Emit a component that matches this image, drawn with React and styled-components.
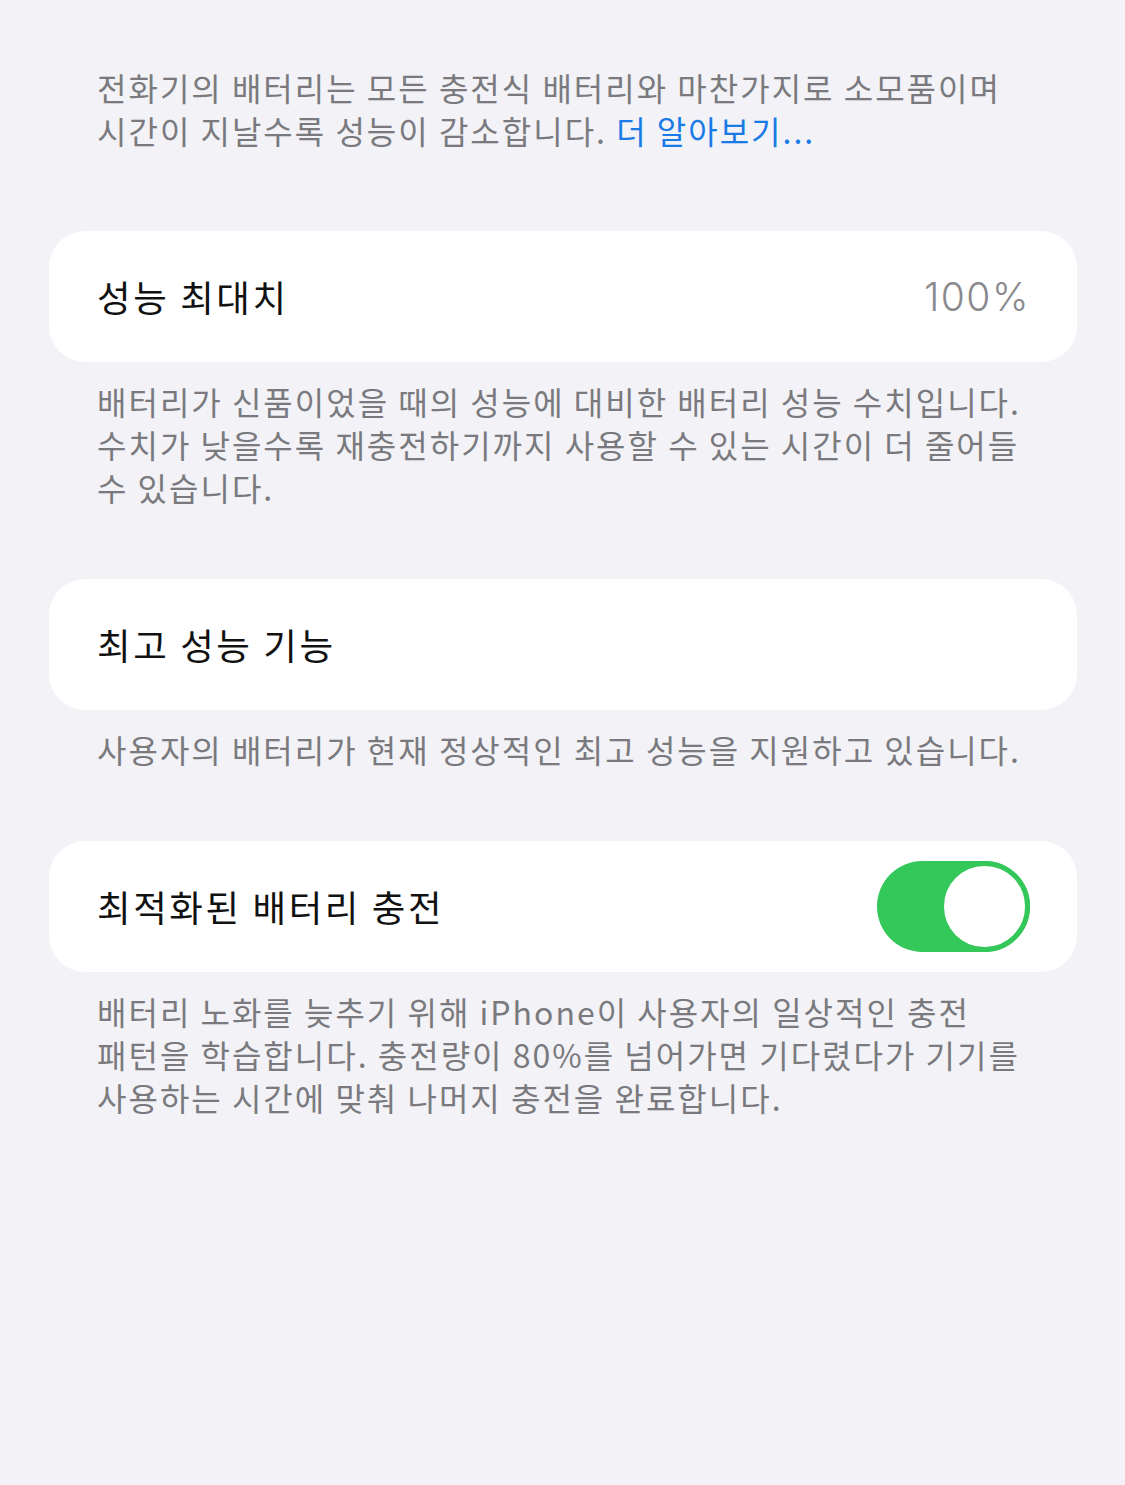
import React from "react";
import styled, { createGlobalStyle } from "styled-components";

const GlobalStyle = createGlobalStyle`
  html, body {
    margin: 0;
    padding: 0;
    background: #f2f2f7;
  }
  body {
    font-family: "Noto Sans CJK KR", "Noto Sans", sans-serif;
    -webkit-font-smoothing: antialiased;
  }
`;

const Page = styled.div`
  min-height: 1485px;
  background: #f2f2f7;
  padding: 66px 48px 0 49px;
  box-sizing: border-box;
  display: flex;
  flex-direction: column;
`;

const Intro = styled.p`
  margin: 0 0 79px 0;
  padding: 0 48px;
  font-size: 32px;
  line-height: 43px;
  letter-spacing: 2px;
  color: #7a7a7e;
  white-space: nowrap;
`;

const Link = styled.span`
  color: #1a7ae6;
`;

const Section = styled.section`
  display: flex;
  flex-direction: column;
  margin-bottom: 70px;
`;

const Card = styled.div`
  height: 131px;
  background: #ffffff;
  border-radius: 36px;
  padding: 0 48px;
  display: flex;
  align-items: center;
  justify-content: space-between;
  box-sizing: border-box;
`;

const Title = styled.span`
  font-size: 36.5px;
  color: #111111;
  letter-spacing: 2.6px;
`;

const Value = styled.span`
  font-size: 39px;
  color: #8a8a8e;
  font-family: "Inter", "Noto Sans", sans-serif;
  font-weight: 300;
  letter-spacing: 1.5px;
  margin-right: -1px;
`;

const Footnote = styled.p`
  margin: 18px 0 0 0;
  padding: 0 48px;
  font-size: 32px;
  line-height: 43px;
  letter-spacing: 2px;
  color: #7a7a7e;
  white-space: nowrap;
`;

const Toggle = styled.div`
  width: 153px;
  height: 91px;
  border-radius: 46px;
  background: #34c759;
  display: flex;
  align-items: center;
  justify-content: ${(p) => (p.$on ? "flex-end" : "flex-start")};
  box-sizing: border-box;
  margin-right: -1px;
`;

const Knob = styled.div`
  width: 81px;
  height: 81px;
  border-radius: 50%;
  background: #ffffff;
  border: 5px solid #34c759;
  box-sizing: content-box;
`;

export default function App() {
  return (
    <>
      <GlobalStyle />
      <Page>
        <Intro>
          전화기의 배터리는 모든 충전식 배터리와 마찬가지로 소모품이며
          <br />
          시간이 지날수록 성능이 감소합니다. <Link>더 알아보기...</Link>
        </Intro>

        <Section>
          <Card>
            <Title>성능 최대치</Title>
            <Value>100%</Value>
          </Card>
          <Footnote>
            배터리가 신품이었을 때의 성능에 대비한 배터리 성능 수치입니다.
            <br />
            수치가 낮을수록 재충전하기까지 사용할 수 있는 시간이 더 줄어들
            <br />수 있습니다.
          </Footnote>
        </Section>

        <Section>
          <Card>
            <Title>최고 성능 기능</Title>
          </Card>
          <Footnote>
            사용자의 배터리가 현재 정상적인 최고 성능을 지원하고 있습니다.
          </Footnote>
        </Section>

        <Section>
          <Card>
            <Title>최적화된 배터리 충전</Title>
            <Toggle $on>
              <Knob />
            </Toggle>
          </Card>
          <Footnote>
            배터리 노화를 늦추기 위해 iPhone이 사용자의 일상적인 충전
            <br />
            패턴을 학습합니다. 충전량이 80%를 넘어가면 기다렸다가 기기를
            <br />
            사용하는 시간에 맞춰 나머지 충전을 완료합니다.
          </Footnote>
        </Section>
      </Page>
    </>
  );
}
